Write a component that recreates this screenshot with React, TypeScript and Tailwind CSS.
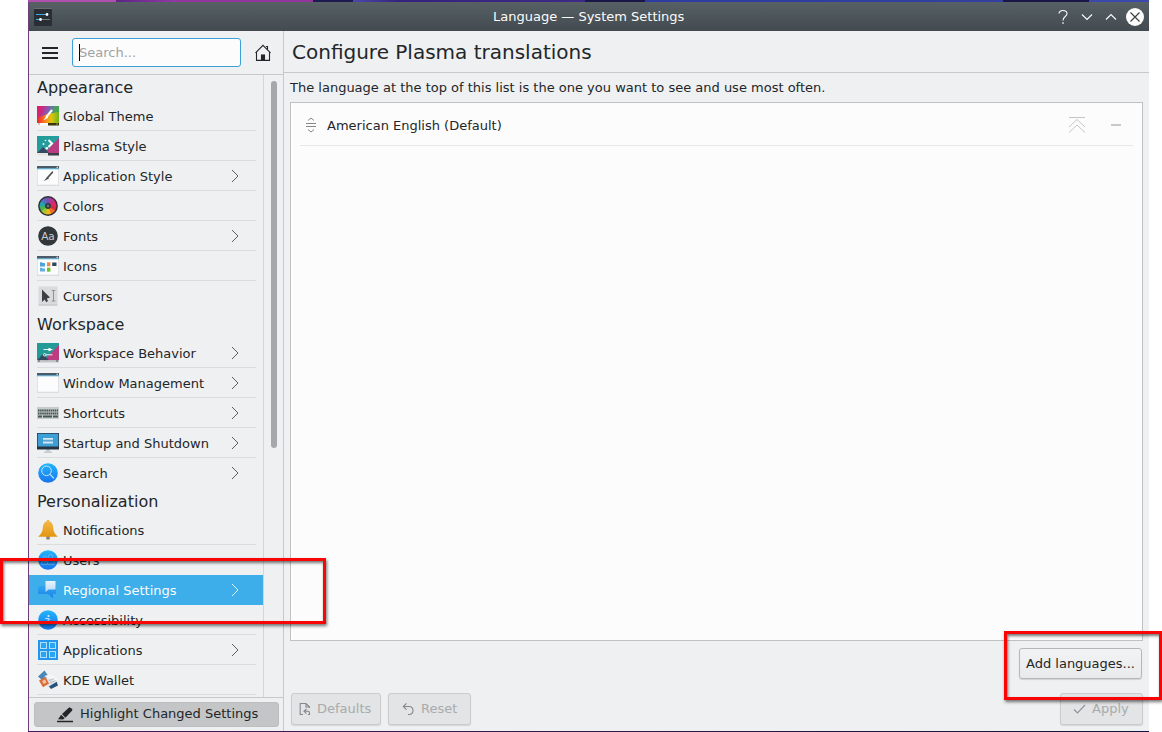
import type { ReactNode } from "react";

type Item = { label: string; icon: ReactNode; arrow?: boolean; selected?: boolean; last?: boolean };

function Icon({ children }: { children: ReactNode }) {
  return (
    <svg width="22" height="22" viewBox="0 0 22 22" className="shrink-0">
      {children}
    </svg>
  );
}

const globalTheme = (
  <Icon>
    <defs>
      <linearGradient id="gt" x1="0" y1="0" x2="1" y2="0.25">
        <stop offset="0" stopColor="#e8175d" />
        <stop offset="0.3" stopColor="#c0308a" />
        <stop offset="0.55" stopColor="#7a62b8" />
        <stop offset="0.8" stopColor="#4f9a6a" />
        <stop offset="1" stopColor="#3fae3f" />
      </linearGradient>
      <linearGradient id="gt2" x1="0" y1="0" x2="1" y2="0">
        <stop offset="0" stopColor="#f0202c" />
        <stop offset="0.4" stopColor="#f58a1c" />
        <stop offset="0.65" stopColor="#e0c50c" />
        <stop offset="1" stopColor="#6fb51c" />
      </linearGradient>
    </defs>
    <rect y="1" width="22" height="17" fill="url(#gt)" />
    <path d="M0 13L10 9L22 7V18H0Z" fill="url(#gt2)" />
    <rect y="18" width="11" height="2.5" fill="#fafafa" />
    <rect x="11" y="18" width="11" height="2.5" fill="#3a3412" />
    <path d="M1 18.5h2v1H1zM19 18.5h2v1h-2z" fill="#a09060" />
    <path d="M14.6 5.5L9.7 11.5" stroke="#fff" strokeWidth="2" strokeLinecap="round" />
    <path d="M9.8 10.5L6.5 15.2L11 13Z" fill="#fff" />
  </Icon>
);

const plasmaStyle = (
  <Icon>
    <defs>
      <linearGradient id="ps" x1="0" y1="0" x2="1" y2="1">
        <stop offset="0" stopColor="#1d9a98" />
        <stop offset="1" stopColor="#2fa0a5" />
      </linearGradient>
    </defs>
    <rect y="1" width="22" height="17" fill="url(#ps)" />
    <path d="M22 3L7 18H22Z" fill="#b83c80" />
    <path d="M0 18L6 12L12 18Z" fill="#34495e" />
    <rect y="18" width="11" height="2.5" fill="#e4e4e4" />
    <rect x="11" y="18" width="11" height="2.5" fill="#3b3f45" />
    <path d="M11.5 5L15 8.5L11.5 12" fill="none" stroke="#fff" strokeWidth="2" />
    <circle cx="6.5" cy="9" r="1" fill="#fff" />
    <circle cx="8.5" cy="5.5" r="0.8" fill="#fff" />
    <circle cx="9.8" cy="13.2" r="1.3" fill="#fff" />
  </Icon>
);

function WindowFrame() {
  return (
    <>
      <rect y="1" width="22" height="19.5" fill="#c8cbcd" />
      <rect x="0.5" y="3.5" width="21" height="16.3" fill="#fcfcfc" />
      <rect y="1" width="22" height="2.6" fill="#4a5a66" />
      <rect y="3.4" width="22" height="0.9" fill="#52b3e2" />
      <circle cx="20.2" cy="2.2" r="0.7" fill="#fff" />
    </>
  );
}

const appStyle = (
  <Icon>
    <WindowFrame />
    <path d="M15.4 7.2L10.5 12.8" stroke="#4d4d4d" strokeWidth="1.7" strokeLinecap="round" />
    <path d="M10.5 11.7L6.7 16L11.8 13.8Z" fill="#4d4d4d" />
  </Icon>
);

const wheel = ["#d62c36", "#ed6b25", "#f0b51d", "#a6c52a", "#43b554", "#26a5a6", "#4b72bf", "#7d4db4", "#b43590", "#df2864"];

const colors = (
  <Icon>
    <circle cx="11" cy="11" r="9.9" fill="#2e2c35" />
    {wheel.map((fill, i) => (
      <path key={fill} d="M11 11L11.2 2.6A8.4 8.4 0 0 1 17.2 5.3Z" fill={fill} transform={`rotate(${i * 36 + 85} 11 11)`} />
    ))}
    <circle cx="11" cy="11" r="3" fill="#343a40" />
    <circle cx="11" cy="11" r="1.2" fill="#69777c" />
  </Icon>
);

const fonts = (
  <Icon>
    <circle cx="11" cy="11" r="9.8" fill="#31373b" />
    <text x="11" y="15" textAnchor="middle" fontSize="10.5" fill="#c9cdcf" fontFamily="DejaVu Sans, sans-serif">
      Aa
    </text>
  </Icon>
);

const icons = (
  <Icon>
    <WindowFrame />
    <path d="M3 7.2h2l.6.7H8V11.5H3z" fill="#4ba4dd" />
    <rect x="10" y="7.3" width="3.4" height="4" fill="#ee8a4c" />
    <rect x="15.2" y="7.5" width="4.3" height="3.5" fill="#2c4763" />
    <path d="M3 12.7h2l.6.7H8V16.5H3z" fill="#62aee0" />
    <rect x="10" y="12.7" width="3.4" height="4" fill="#6ec22f" />
  </Icon>
);

const cursors = (
  <Icon>
    <rect x="1.5" y="1.5" width="19" height="19" rx="1" fill="#d9dbdc" />
    <path d="M1.5 20h19" stroke="#bfc1c2" />
    <path d="M5 4.5V17L7.7 14.5L9.2 17.2L11 16L9.8 13.4L13 12.6Z" fill="#3c4043" />
    <path d="M14.7 5.5h3.6M14.7 16h3.6M16.5 5.5V16" fill="none" stroke="#85898b" strokeWidth="0.9" />
  </Icon>
);

const workspace = (
  <Icon>
    <rect y="1" width="22" height="17.3" fill="#219a98" />
    <path d="M22 3L7 18.3H22Z" fill="#bd3c81" />
    <path d="M0 18.3L6 12L12 18.3Z" fill="#34495e" />
    <rect y="18.3" width="22" height="2.2" fill="#c3c6c8" />
    <path d="M1 19h2M19 19h2" stroke="#555" />
    <path d="M6.5 7.5H15.5M6.5 12.8H15.5" stroke="#fff" strokeWidth="0.9" />
    <circle cx="12.5" cy="7.5" r="1.6" fill="#fff" />
    <circle cx="7.7" cy="12.8" r="1.3" fill="#34808a" stroke="#fff" strokeWidth="0.8" />
  </Icon>
);

const windowMgmt = (
  <Icon>
    <WindowFrame />
  </Icon>
);

const shortcuts = (
  <Icon>
    <rect y="5" width="22" height="12" fill="#c4cbca" />
    <path d="M1 8.5h20M1 11.5h20" stroke="#485653" strokeWidth="2" strokeDasharray="1.6 0.5" />
    <path d="M1 14.5h4M6 14.5h9M16 14.5h5" stroke="#485653" strokeWidth="2" />
  </Icon>
);

const startup = (
  <Icon>
    <path d="M9 17h4v2.5h2V21H7v-1.5h2z" fill="#c9cdd0" />
    <rect y="1" width="22" height="16.5" fill="#263441" />
    <rect x="0.7" y="1.7" width="20.6" height="12.8" fill="#3e9ed6" />
    <path d="M6 6.8h10M6 10.5h10" stroke="#d3eaf5" strokeWidth="1.8" />
    <path d="M6 8.7h10" stroke="#79a9c4" strokeWidth="0.7" />
  </Icon>
);

function BlueDisc({ children }: { children: ReactNode }) {
  return (
    <Icon>
      <defs>
        <linearGradient id="disc" x1="0" y1="0" x2="0" y2="1">
          <stop offset="0" stopColor="#22b5fb" />
          <stop offset="1" stopColor="#1a74ee" />
        </linearGradient>
      </defs>
      <circle cx="11" cy="11" r="9.8" fill="url(#disc)" />
      {children}
    </Icon>
  );
}

const search = (
  <BlueDisc>
    <circle cx="9.5" cy="8.8" r="4.8" fill="none" stroke="#c4e8ff" />
    <path d="M13 12.4L17 16.4" stroke="#c4e8ff" strokeWidth="1.2" />
  </BlueDisc>
);

const bell = (
  <Icon>
    <defs>
      <linearGradient id="bell" x1="0" y1="0" x2="0" y2="1">
        <stop offset="0" stopColor="#f3bb4b" />
        <stop offset="1" stopColor="#e39511" />
      </linearGradient>
    </defs>
    <circle cx="11" cy="18.8" r="2" fill="#8d8375" />
    <path d="M11 .8c1 0 1.5.7 1.5 1.7 2.4.8 3.5 3 3.7 6 .2 4 1.4 6 4.5 9.3H1.3c3.1-3.3 4.3-5.3 4.5-9.3.2-3 1.3-5.2 3.7-6C9.5 1.5 10 .8 11 .8Z" fill="url(#bell)" />
  </Icon>
);

const users = (
  <BlueDisc>
    <g fill="none" stroke="#6db8f8" strokeWidth="0.8">
      <circle cx="8" cy="9" r="1.8" />
      <circle cx="13.5" cy="7.7" r="2.2" />
      <path d="M4.5 15.3v-1q0-2 2-2h3q1 0 1.5.8M10.5 15.3v-2q0-2 2-2h2.5q2 0 2 2v2zM4.5 15.3h6" />
    </g>
  </BlueDisc>
);

const regional = (
  <Icon>
    <defs>
      <linearGradient id="bub" x1="0" y1="0" x2="0" y2="1">
        <stop offset="0" stopColor="#2fa6ee" />
        <stop offset="1" stopColor="#2080ea" />
      </linearGradient>
      <linearGradient id="bub2" x1="0" y1="0" x2="0" y2="1">
        <stop offset="0" stopColor="#eaf4fd" />
        <stop offset="1" stopColor="#b9d8f7" />
      </linearGradient>
    </defs>
    <path d="M1 7H19V15H16V19.5L11 15H1Z" fill="url(#bub)" />
    <path d="M8.5 2H18.5V10.5H11.5L8.5 13Z" fill="url(#bub2)" />
  </Icon>
);

const accessibility = (
  <BlueDisc>
    <circle cx="11.5" cy="7" r="1.1" fill="#d8efff" />
    <path d="M8.3 9.5H11.2L13.2 10.3M11.2 9.5V12L9.3 14.6M11.2 12L12.8 14.8" fill="none" stroke="#c4e6fe" strokeWidth="1" />
  </BlueDisc>
);

const applications = (
  <Icon>
    <rect x="1" y="1" width="20" height="20" fill="#2596ed" />
    <g fill="#29a5f4" stroke="#ace0fc" strokeWidth="1">
      <rect x="3.5" y="3.5" width="6" height="6" />
      <rect x="12.5" y="3.5" width="6" height="6" />
      <rect x="3.5" y="12.5" width="6" height="6" />
      <rect x="12.5" y="12.5" width="6" height="6" />
    </g>
  </Icon>
);

const wallet = (
  <Icon>
    <path d="M1 7.5L7.5 1.5L12 8L5 11Z" fill="#4b86b6" />
    <path d="M10 15L19 11L21 16.5L14 20Z" fill="#27517c" />
    <path d="M6 9L16 7L21 12L11 18Z" fill="#dfe3e7" />
    <path d="M7 7L14.5 5L21.5 10.5L18 12.5Z" fill="#f4f5f6" />
    <path d="M2 11.5L8.5 8L12 14.5L6 18.3Z" fill="#d96d38" />
    <path d="M5 12L8 10.5L9.5 13.5L6.7 15Z" fill="#f5c0a3" />
    <path d="M12 11.5L17 9.8M13 14L18.5 11.5" stroke="#aab3ba" strokeWidth="0.8" />
  </Icon>
);

const groups: { title: string; items: Item[] }[] = [
  {
    title: "Appearance",
    items: [
      { label: "Global Theme", icon: globalTheme },
      { label: "Plasma Style", icon: plasmaStyle },
      { label: "Application Style", icon: appStyle, arrow: true },
      { label: "Colors", icon: colors },
      { label: "Fonts", icon: fonts, arrow: true },
      { label: "Icons", icon: icons },
      { label: "Cursors", icon: cursors, last: true },
    ],
  },
  {
    title: "Workspace",
    items: [
      { label: "Workspace Behavior", icon: workspace, arrow: true },
      { label: "Window Management", icon: windowMgmt, arrow: true },
      { label: "Shortcuts", icon: shortcuts, arrow: true },
      { label: "Startup and Shutdown", icon: startup, arrow: true },
      { label: "Search", icon: search, arrow: true, last: true },
    ],
  },
  {
    title: "Personalization",
    items: [
      { label: "Notifications", icon: bell },
      { label: "Users", icon: users, last: true },
      { label: "Regional Settings", icon: regional, arrow: true, selected: true, last: true },
      { label: "Accessibility", icon: accessibility },
      { label: "Applications", icon: applications, arrow: true },
      { label: "KDE Wallet", icon: wallet },
    ],
  },
];

function Row({ item }: { item: Item }) {
  return (
    <div className={item.selected ? "h-[30px] bg-[#3daee9] pr-[7px] pl-2 text-[#fcfcfc]" : "h-[30px] pr-[7px] pl-2"}>
      <div className={item.last ? "flex h-[30px] items-center" : "flex h-[30px] items-center border-b border-[#dadcdd] pt-px"}>
        {item.icon}
        <span className="ml-1 grow pt-[2px] whitespace-nowrap">{item.label}</span>
        {item.arrow && (
          <svg width="10" height="14" viewBox="0 0 10 14" className="mr-[15px]" fill="none" stroke={item.selected ? "#e8f6fd" : "#5c6063"}>
            <path d="M1 1L7 7L1 13" />
          </svg>
        )}
      </div>
    </div>
  );
}

function Sidebar() {
  return (
    <aside className="flex w-[255px] shrink-0 flex-col border-r border-[#c6c8c9]">
      <div className="flex h-[44px] shrink-0 items-center border-b border-[#c6c8c9]">
        <svg width="16" height="12" viewBox="0 0 16 12" className="ml-[13px]" fill="#232629">
          <path d="M0 0h16v2H0zM0 5h16v2H0zM0 10h16v2H0z" />
        </svg>
        <div className="ml-[14px] flex h-[29px] w-[169px] items-center rounded-[3px] border border-[#3d9fd8] bg-[#fcfcfc] pl-1.5">
          <span className="h-[17px] w-px bg-black" />
          <span className="-ml-px text-[#a0a2a4]">Search...</span>
        </div>
        <svg width="16" height="17" viewBox="0 0 16 17" className="ml-[14px]" fill="none" stroke="#232629" strokeWidth="1.1">
          <path d="M.5 8.8L8 1.3L15.5 8.8M1.5 8V16.4H14.5V8M12.5 5.5V2.5H11" />
          <rect x="6.5" y="11" width="3" height="5" fill="#232629" />
        </svg>
      </div>
      <div className="flex h-[622px] overflow-hidden">
        <nav className="w-[234px] shrink-0">
          {groups.map((g, i) => (
            <section key={g.title}>
              <h2 className={i === 0 ? "h-[26px] pl-2 text-base leading-[26px]" : "h-[27px] pl-2 text-base leading-[28px]"}>{g.title}</h2>
              {g.items.map((item) => (
                <Row key={item.label} item={item} />
              ))}
            </section>
          ))}
        </nav>
        <div className="grow border-l border-[#d3d5d6] pt-1.5 pl-[7px]">
          <div className="h-[367px] w-1.5 rounded-full bg-[#a5a8aa]" />
        </div>
      </div>
      <div className="grow border-t border-[#c6c8c9] px-[5px] pt-1">
        <div className="flex h-[25px] w-[245px] items-center rounded-[3px] border border-[#bdbebf] bg-[#c3c5c6] pl-[22px]">
          <svg width="17" height="16" viewBox="0 0 17 16" fill="#232629">
            <path d="M0 13.7h16v1.6H0zM1 12.2L4.2 7.7L7.7 11.2L6 12.4ZM5 7L12.3 .2L15.4 2L15 3.7L8.4 10.7Z" />
          </svg>
          <span className="ml-1.5 pb-[2px] whitespace-nowrap">Highlight Changed Settings</span>
        </div>
      </div>
    </aside>
  );
}

function TitleBar() {
  return (
    <header className="flex h-[29px] items-center bg-linear-to-b from-[#566065] to-[#434b50] text-[#fcfcfc]">
      <svg width="18" height="18" viewBox="0 0 18 18" className="ml-[5px]">
        <rect width="18" height="18" rx="1" fill="#292e34" />
        <path d="M0 .5h18" stroke="#666c70" />
        <path d="M2 6.5h11" stroke="#3daee9" />
        <path d="M8 11.5h8" stroke="#737b80" />
        <path d="M2 11.5h4" stroke="#3daee9" />
        <circle cx="13" cy="6.5" r="1.4" fill="#fff" />
        <circle cx="6.5" cy="11.5" r="1.4" fill="#fff" />
      </svg>
      <h1 className="ml-[441px] grow whitespace-nowrap">Language — System Settings</h1>
      <svg width="90" height="18" viewBox="0 0 90 18" className="mr-[5px]" fill="none" stroke="#fcfcfc">
        <path d="M5 5.6C5 1.4 13 1.4 13 5.8C13 8.8 9 8.3 9 12.5" strokeWidth="1.1" />
        <path d="M9 14.3v1.5" strokeWidth="1.4" />
        <path d="M28 6.5L33 11.5L38 6.5M52 11.5L57 6.5L62 11.5" strokeWidth="1.1" />
        <circle cx="81" cy="9" r="9" fill="#fcfcfc" stroke="none" />
        <path d="M76.5 4.5L85.5 13.5M85.5 4.5L76.5 13.5" stroke="#3b4246" strokeWidth="1.2" />
      </svg>
    </header>
  );
}

function Main() {
  return (
    <main className="flex grow flex-col">
      <div className="h-[42px] shrink-0 border-b border-[#c6c8c9] pl-2 text-xl leading-[43px]">Configure Plasma translations</div>
      <p className="h-[29px] shrink-0 pl-1.5 leading-[29px]">The language at the top of this list is the one you want to see and use most often.</p>
      <div className="ml-1.5 h-[539px] w-[853px] shrink-0 border border-[#bfc1c2] bg-[#fcfcfc] px-[9px]">
        <div className="flex h-[43px] items-center border-b border-[#e6e7e7] pt-[2px]">
          <svg width="12" height="16" viewBox="0 0 12 16" className="ml-[5px]" fill="none" stroke="#85888a">
            <path d="M1 6.5h10M1 9.5h10M3 3.5L6 1L9 3.5M3 12.5L6 15L9 12.5" />
          </svg>
          <span className="ml-[10px] grow pt-[2px]">American English (Default)</span>
          <svg width="18" height="16" viewBox="0 0 18 16" className="mr-[25px]" fill="none" stroke="#c4c5c6">
            <path d="M1 .5h16M1 10L9 2.5L17 10M1 15.5L9 8L17 15.5" />
          </svg>
          <span className="mr-[12px] h-[2px] w-[10px] bg-[#c8c9ca]" />
        </div>
      </div>
      <div className="flex shrink-0 justify-end pt-[7px] pr-[7px]">
        <button className="h-[31px] w-[123px] rounded-[3px] border border-[#b5b7b9] bg-linear-to-b from-[#f2f3f4] to-[#e9eaeb] whitespace-nowrap shadow-[0_1px_1px_#cfd1d2]">
          Add languages...
        </button>
      </div>
      <div className="flex gap-[6px] pt-[14px] pr-[6px] pl-[7px] text-[#a9abac]">
        <button className="flex h-8 w-[90px] items-center rounded-[3px] border border-[#cacccd] bg-[#e2e4e5] pl-[7px] shadow-[0_1px_1px_#d2d4d5]">
          <svg width="12" height="14" viewBox="0 0 12 14" fill="none" stroke="#85888a" strokeWidth="1.1">
            <path d="M4 12.5H1.2V1.5H7L10.5 5V6M7 1.5V5H10.5M7.5 7L5 9.3L7.5 11.6M5 9.3H9Q10.5 9.3 10.5 11V12.5H9" />
          </svg>
          <span className="ml-[6px]">Defaults</span>
        </button>
        <button className="ml-px flex h-8 w-[83px] items-center rounded-[3px] border border-[#cacccd] bg-[#e2e4e5] pl-[13px] shadow-[0_1px_1px_#d2d4d5]">
          <svg width="12" height="14" viewBox="0 0 12 14" fill="none" stroke="#85888a" strokeWidth="1.1">
            <path d="M4.5 1.3L1.3 4.5L4.5 7.7M1.3 4.5H7Q11 4.7 11 8.5T7 12.5H6" />
          </svg>
          <span className="ml-[7px]">Reset</span>
        </button>
        <button className="ml-auto flex h-8 w-[83px] items-center rounded-[3px] border border-[#cacccd] bg-[#e2e4e5] pl-[12px] shadow-[0_1px_1px_#d2d4d5]">
          <svg width="13" height="12" viewBox="0 0 13 12" fill="none" stroke="#919496" strokeWidth="1.2">
            <path d="M1 6.5L4.5 10L12 2" />
          </svg>
          <span className="ml-[6px]">Apply</span>
        </button>
      </div>
    </main>
  );
}

function WallpaperStrip() {
  return (
    <div className="flex h-[2px] shrink-0">
      <div className="w-[88px] bg-[#b04fae]" />
      <div className="w-[60px] bg-linear-to-r from-[#5c2585] to-[#9438a4]" />
      <div className="w-[137px] bg-[#93359c]" />
      <div className="w-[40px] bg-[#1d1a52]" />
      <div className="w-[232px] bg-linear-to-r from-[#4a49ad] via-[#35227c] via-20% to-[#3c2a86]" />
      <div className="w-[60px] bg-[#191747]" />
      <div className="w-[358px] bg-linear-to-r from-[#2c3ca2] to-[#33409f]" />
      <div className="w-[86px] bg-[#1a1647]" />
      <div className="grow bg-[#3b48ac]" />
    </div>
  );
}

export default function App() {
  return (
    <div className="relative h-[732px] w-[1162px] overflow-hidden bg-white font-['DejaVu_Sans',sans-serif] text-[13px] leading-4 text-[#232629]">
      <div className="ml-7 flex h-[732px] w-[1121px] flex-col">
        <WallpaperStrip />
        <div className="flex h-[729px] shrink-0 flex-col border-l border-[#6c3f78] bg-[#eff0f1]">
          <TitleBar />
          <div className="flex grow">
            <Sidebar />
            <Main />
          </div>
        </div>
        <div className="h-px bg-linear-to-r from-[#4a1b60] to-[#11133c]" />
      </div>
      <div className="absolute top-[558px] left-0 h-[66px] w-[326px] border-3 border-[#f80505] shadow-[1px_2px_3px_#0008,inset_1px_2px_3px_#0008]" />
      <div className="absolute top-[631px] left-[1004px] h-[69px] w-[158px] border-3 border-[#f80505] shadow-[1px_2px_3px_#0008,inset_1px_2px_3px_#0008]" />
    </div>
  );
}
